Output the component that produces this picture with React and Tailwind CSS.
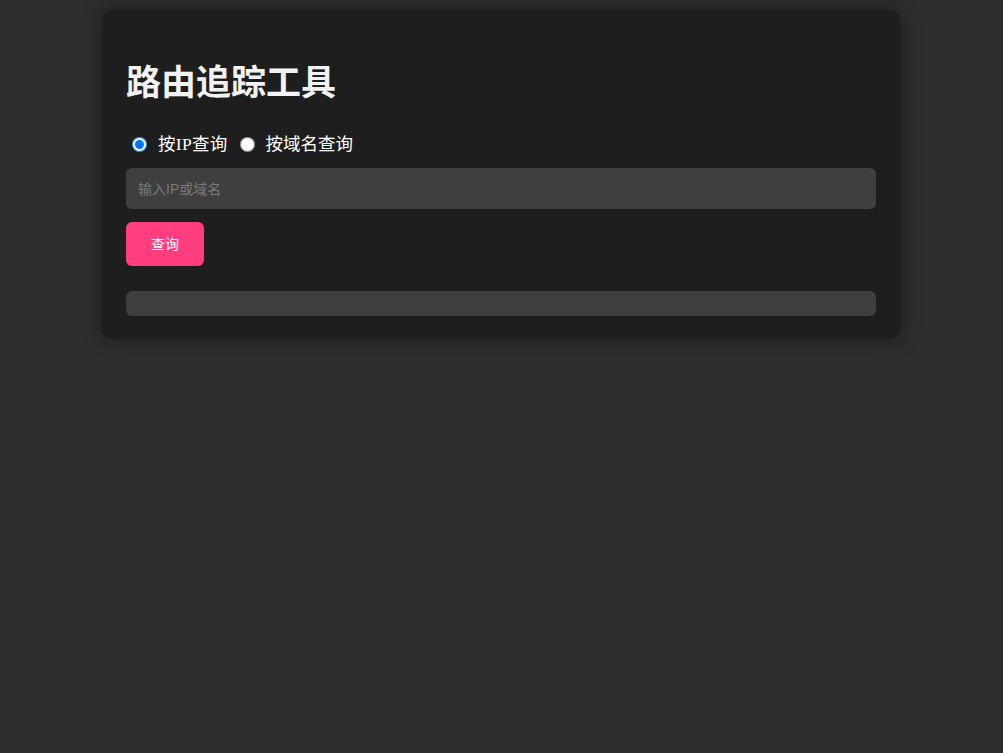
import { useState } from 'react'

export default function App() {
  const [mode, setMode] = useState('ip')
  const [query, setQuery] = useState('')

  return (
    <div className="min-h-[753px] bg-[#2d2d2d] pt-[10px]" style={{ fontFamily: '"Liberation Serif", "Noto Sans CJK SC", serif' }}>
      <div className="ml-[102px] w-[798px] rounded-[10px] bg-[#1e1e1e] px-6 pt-[30px] pb-[23px] shadow-[0_0_20px_rgba(0,0,0,0.35)]">
        <h1 className="mt-[24px] text-[35px] font-bold leading-[40px] text-[#f2f2f2]">路由追踪工具</h1>

        <div className="mt-[30px] flex h-[20px] items-center text-[17.5px] text-white">
          <input
            type="radio"
            name="mode"
            checked={mode === 'ip'}
            onChange={() => setMode('ip')}
            className="ml-[6px] h-[15px] w-[15px]"
          />
          <span className="ml-[11px] tracking-[0.3px]">按IP查询</span>
          <input
            type="radio"
            name="mode"
            checked={mode === 'domain'}
            onChange={() => setMode('domain')}
            className="ml-[12px] h-[15px] w-[15px]"
          />
          <span className="ml-[11px]">按域名查询</span>
        </div>

        <input
          type="text"
          value={query}
          onChange={(e) => setQuery(e.target.value)}
          placeholder="输入IP或域名"
          className="mt-[14px] block h-[41px] w-full rounded-[6px] bg-[#3f3f3f] px-3 text-[14px] text-white outline-none placeholder:text-[#7a7a7a]"
          style={{ fontFamily: '"Liberation Sans", "Noto Sans CJK SC", sans-serif' }}
        />

        <button
          className="mt-[13px] block h-[44px] w-[78px] rounded-[6px] bg-[#ff3d7f] text-[14px] text-white"
          style={{ fontFamily: '"Liberation Sans", "Noto Sans CJK SC", sans-serif' }}
        >
          查询
        </button>

        <div className="mt-[25px] h-[25px] rounded-[6px] bg-[#3f3f3f]"></div>
      </div>
    </div>
  )
}
